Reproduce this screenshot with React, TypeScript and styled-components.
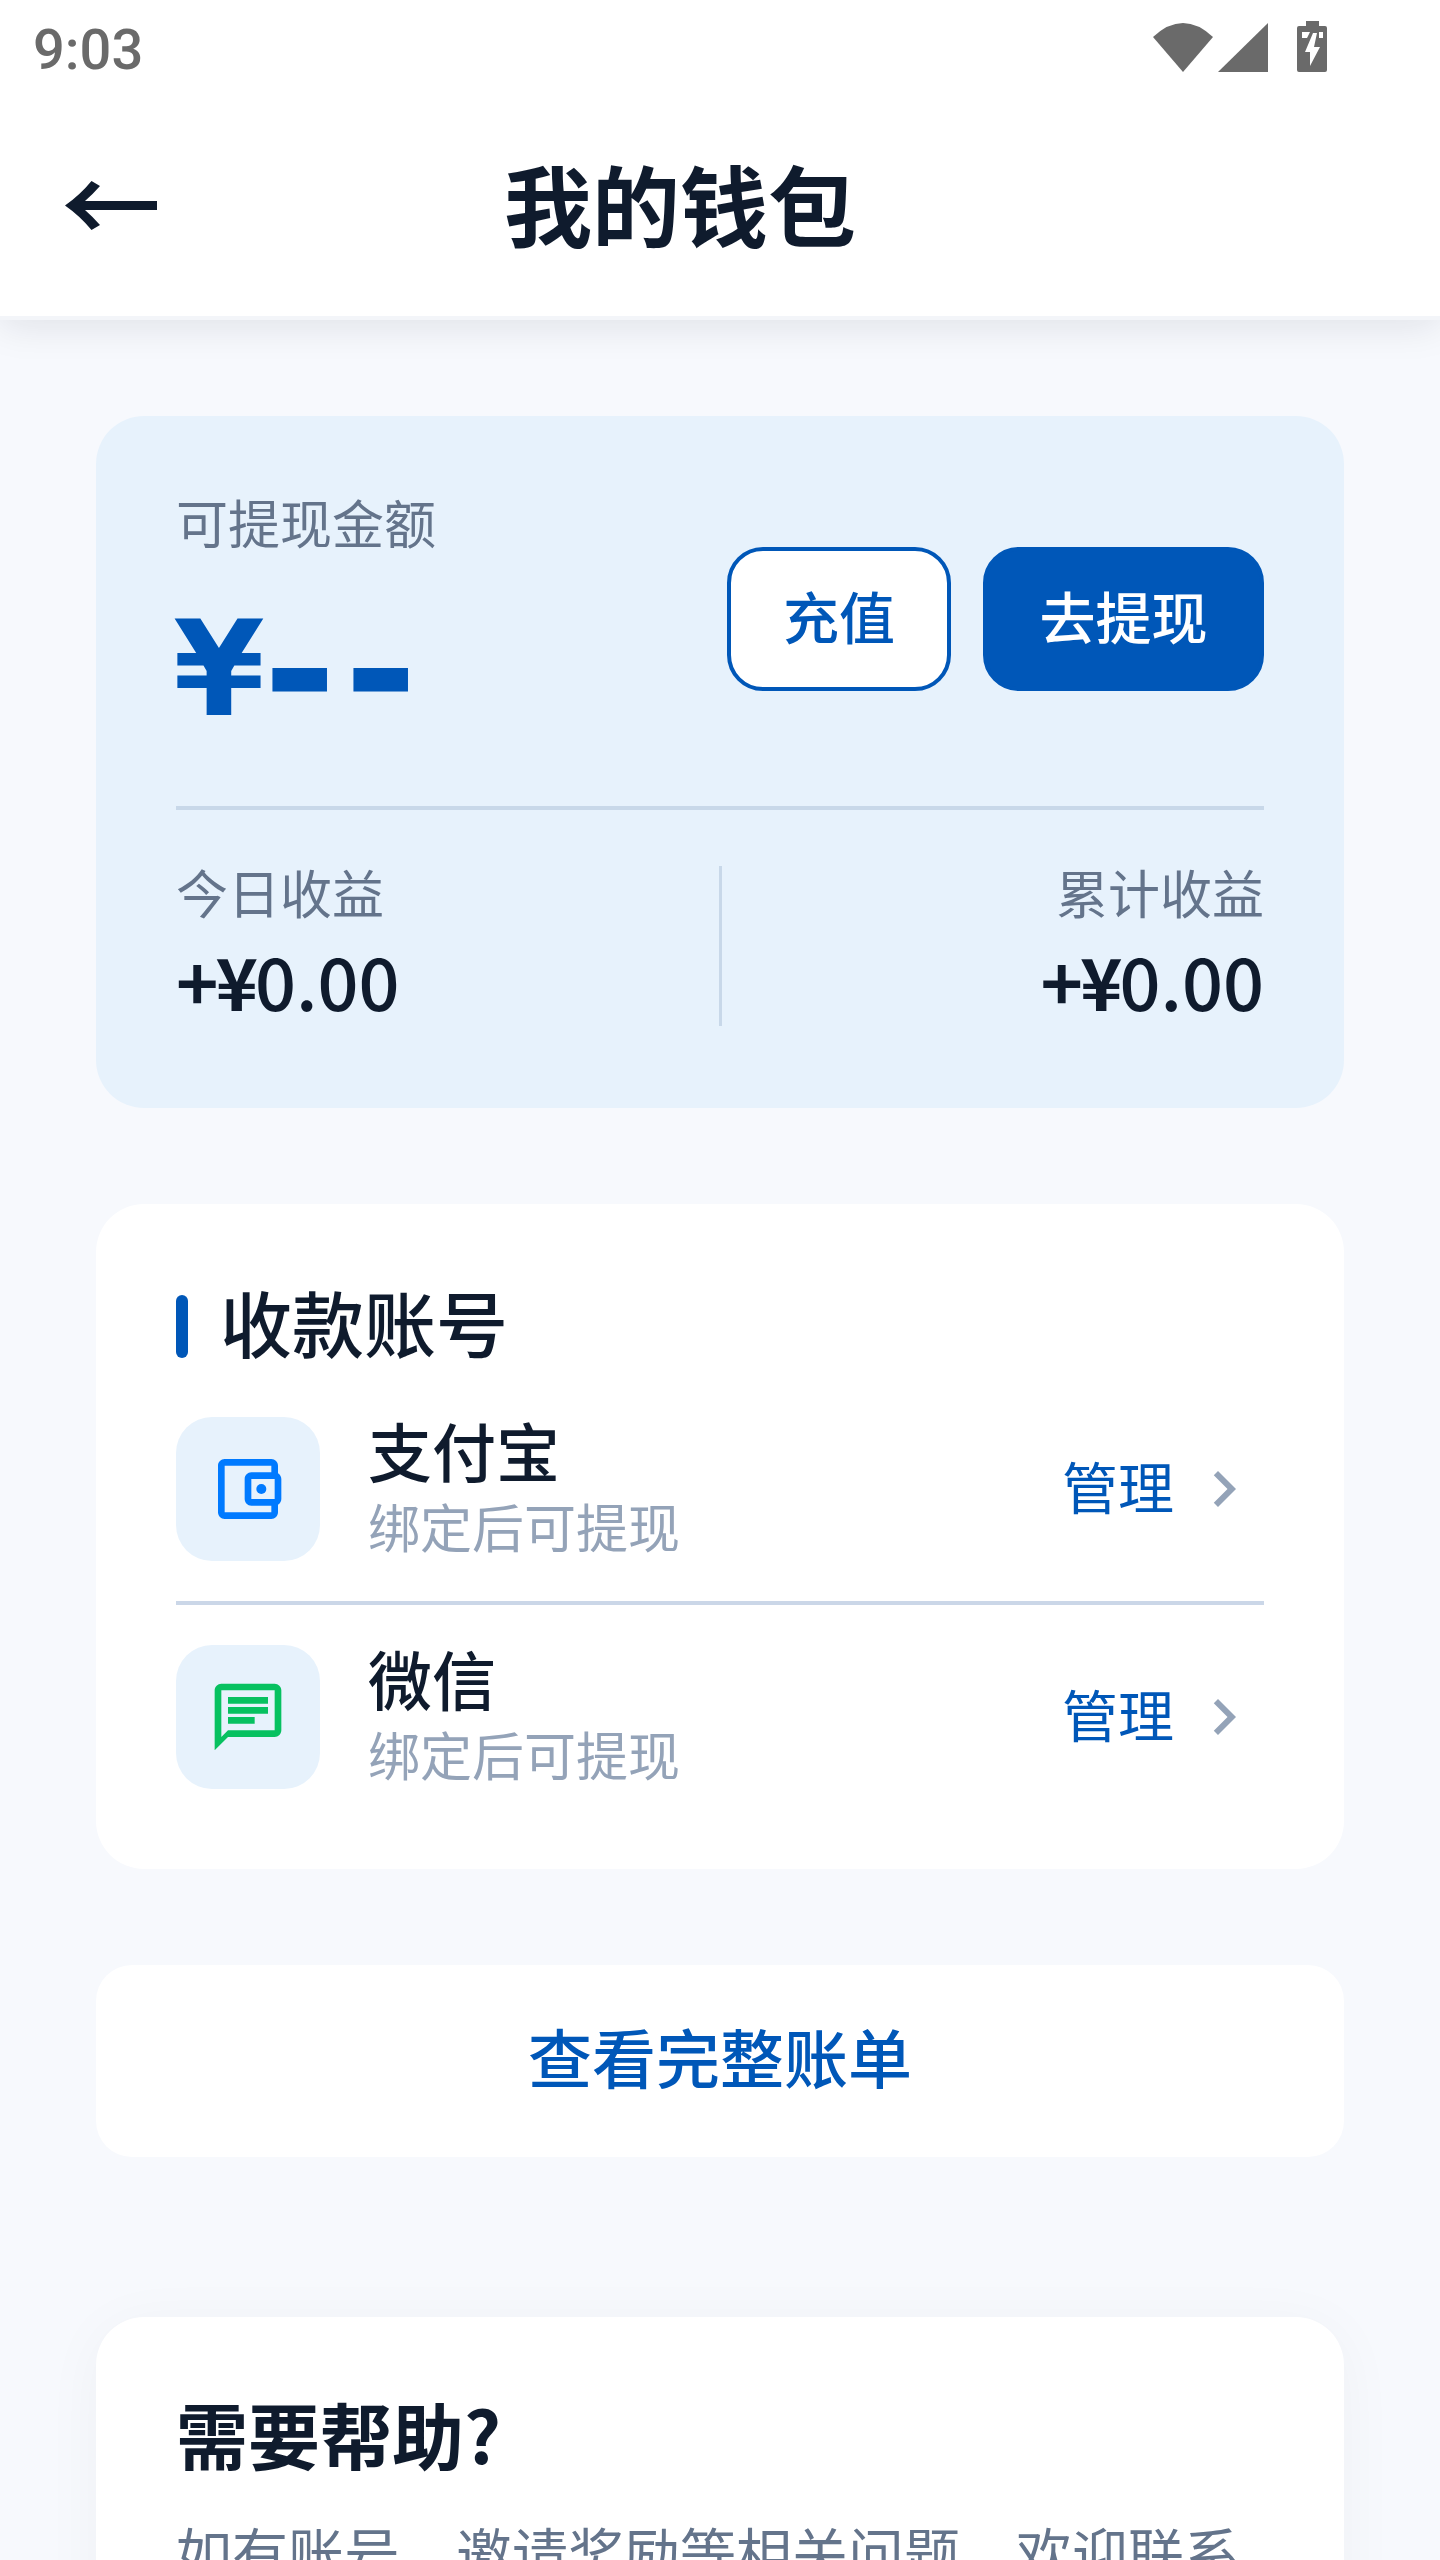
import styled, { createGlobalStyle } from 'styled-components'

const GlobalStyle = createGlobalStyle`
	html, body {
		margin: 0;
		padding: 0;
		overflow: hidden;
	}
	* {
		box-sizing: border-box;
	}
	body {
		font-family: 'Noto Sans CJK SC', sans-serif;
		background: #f7f9fd;
	}
`

const Page = styled.div`
	width: 1440px;
	height: 2560px;
	overflow: hidden;
	background: #f7f9fd;
`

const Top = styled.header`
	height: 320px;
	background: #ffffff;
	border-bottom: 4px solid #f3f5f9;
	box-shadow: 0 6px 36px rgba(15, 23, 42, 0.1);
	position: relative;
`

const StatusBar = styled.div`
	height: 100px;
	padding: 17px 112px 0 33px;
	display: flex;
	justify-content: space-between;
	align-items: flex-start;
`

const Time = styled.span`
	font-family: Roboto, sans-serif;
	font-size: 56px;
	line-height: 66px;
	font-weight: 500;
	color: #6a6a6a;
`

const StatusIcons = styled.svg`
	width: 176px;
	height: 60px;
	margin-top: 3px;
`

const AppBar = styled.div`
	height: 216px;
	padding: 0 65px;
	display: flex;
	align-items: center;
`

const BackIcon = styled.svg`
	width: 92px;
	height: 49px;
	margin-top: -6px;
	flex: none;
`

const PageTitle = styled.h1`
	margin: -13px 0 0 347px;
	font-size: 88px;
	line-height: 120px;
	font-weight: 700;
	color: #0f1b2d;
`

const Content = styled.main`
	padding: 96px 96px 0;
	display: flex;
	flex-direction: column;
`

const BalanceCard = styled.section`
	height: 692px;
	padding: 80px;
	border-radius: 48px;
	background: #e7f2fc;
`

const BalanceTop = styled.div`
	height: 314px;
	display: flex;
	justify-content: space-between;
	border-bottom: 4px solid #c8d8e9;
`

const Label = styled.div<{ right?: boolean }>`
	font-size: 52px;
	line-height: 52px;
	color: #64748b;
	text-align: ${(props) => (props.right ? 'right' : 'left')};
`

const Amount = styled.div`
	margin: 45px 0 0 -3px;
	height: 150px;
	font-family: 'DejaVu Sans', sans-serif;
	font-size: 132px;
	line-height: 150px;
	font-weight: 700;
	color: #0057b8;
`

const Dashes = styled.span`
	margin-left: -3px;
	font-family: Inter, sans-serif;
	font-size: 160px;
	font-weight: 900;
	letter-spacing: 5px;
	vertical-align: -11px;
`

const Buttons = styled.div`
	display: flex;
	gap: 32px;
	margin-top: 51px;
`

const ActionButton = styled.button<{ primary?: boolean }>`
	height: 144px;
	padding: 0 ${(props) => (props.primary ? '52.5px' : '52px')} 10px;
	border: 4px solid #0057b8;
	border-radius: 36px;
	background: ${(props) => (props.primary ? '#0057b8' : '#ffffff')};
	color: ${(props) => (props.primary ? '#ffffff' : '#0057b8')};
	font-family: inherit;
	font-size: 56px;
	font-weight: 500;
`

const Stats = styled.div`
	margin-top: 56px;
	display: flex;
`

const Stat = styled.div`
	flex: 1;
	height: 160px;
`

const StatDivider = styled.div`
	width: 3px;
	height: 160px;
	background: #c8d8e9;
`

const StatValue = styled.div<{ right?: boolean }>`
	margin-top: 20px;
	font-size: 72px;
	line-height: 84px;
	font-weight: 500;
	color: #0f1b2d;
	text-align: ${(props) => (props.right ? 'right' : 'left')};
`

const Sign = styled.span`
	font-weight: 700;
	letter-spacing: -3px;
`

const WhiteCard = styled.section`
	margin-top: 96px;
	padding: 80px;
	border-radius: 48px;
	background: #ffffff;
`

const SectionHead = styled.div`
	height: 93px;
	display: flex;
	align-items: center;
	gap: 32px;
`

const Bar = styled.span`
	width: 12px;
	height: 63px;
	margin-top: -8px;
	border-radius: 6px;
	background: #0057b8;
`

const SectionTitle = styled.h2`
	margin: -21px 0 0;
	font-size: 72px;
	line-height: 93px;
	font-weight: 500;
	color: #0f1b2d;
`

const AccountRow = styled.div<{ last?: boolean }>`
	display: flex;
	align-items: center;
	padding: 40px 0 ${(props) => (props.last ? '0' : '40px')};
	border-bottom: ${(props) => (props.last ? 'none' : '4px solid #cbd7e8')};
`

const IconBox = styled.div`
	width: 144px;
	height: 144px;
	border-radius: 36px;
	background: #e7f2fc;
	display: flex;
	align-items: center;
	justify-content: center;
	flex: none;
`

const AccountText = styled.div`
	margin: -10px 0 0 48px;
	flex: 1;
`

const AccountName = styled.div`
	font-size: 64px;
	line-height: 74px;
	font-weight: 500;
	color: #0f1b2d;
`

const AccountHint = styled.div`
	margin-top: 10px;
	font-size: 52px;
	line-height: 60px;
	color: #94a3b8;
`

const Manage = styled.span`
	margin-top: -10px;
	font-size: 56px;
	color: #0057b8;
`

const Chevron = styled.svg`
	width: 72px;
	height: 72px;
	margin: 0 4px 0 14px;
	fill: #94a3b8;
`

const BillButton = styled.div`
	margin-top: 96px;
	height: 192px;
	padding-bottom: 12px;
	border-radius: 36px;
	background: #ffffff;
	display: flex;
	align-items: center;
	justify-content: center;
	font-size: 64px;
	font-weight: 500;
	color: #0057b8;
`

const HelpCard = styled.section`
	margin-top: 160px;
	padding: 80px;
	height: 600px;
	border-radius: 48px;
	background: #ffffff;
	box-shadow: 0 8px 60px rgba(15, 23, 42, 0.04);
`

const HelpTitle = styled.h2`
	margin: 0;
	font-size: 72px;
	line-height: 72px;
	font-weight: 700;
	color: #0f1b2d;
`

const HelpBody = styled.p`
	margin: 40px 0 0;
	font-size: 56px;
	line-height: 84px;
	color: #64748b;
`

const accounts = [
	{ name: '支付宝', icon: 'wallet' },
	{ name: '微信', icon: 'chat' },
]

function WalletIcon() {
	return (
		<svg width="80" height="80" viewBox="0 0 24 24" fill="#007aff">
			<path d="M21 7.28V5c0-1.1-.9-2-2-2H5c-1.11 0-2 .9-2 2v14c0 1.1.89 2 2 2h14c1.1 0 2-.9 2-2v-2.28c.59-.35 1-.98 1-1.72V9c0-.74-.41-1.37-1-1.72zM20 9v6h-7V9h7zM5 19V5h14v2h-6c-1.1 0-2 .9-2 2v6c0 1.1.9 2 2 2h6v2H5z" />
			<circle cx="16" cy="12" r="1.5" />
		</svg>
	)
}

function ChatIcon() {
	return (
		<svg width="80" height="80" viewBox="0 0 24 24" fill="#07c160">
			<path d="M20 2H4c-1.1 0-2 .9-2 2v18l4-4h14c1.1 0 2-.9 2-2V4c0-1.1-.9-2-2-2zm0 14H6l-2 2V4h16v12z" />
			<path d="M6 9h12v2H6zm8 5H6v-2h8v2zm4-6H6V6h12v2z" />
		</svg>
	)
}

export default function App() {
	return (
		<Page>
			<GlobalStyle />
			<Top>
				<StatusBar>
					<Time>9:03</Time>
					<StatusIcons viewBox="0 0 176 60" fill="#6a6a6a">
						<path d="M1 17 Q31 -11 61 17 L31 52 Z" />
						<path d="M66 52 L116 3 V52 Z" />
						<path d="M154 1 h13 v5 h6 a2 2 0 0 1 2 2 v42 a2 2 0 0 1 -2 2 h-26 a2 2 0 0 1 -2 -2 v-42 a2 2 0 0 1 2 -2 h7 z" />
						<path d="M150 12 h8 l-3 6 h-5 z M167 12 h4 v6 h-4 z M161 13 h4 l-3 14 h6 l-10 19 v-14 h-5 z" fill="#ffffff" />
					</StatusIcons>
				</StatusBar>
				<AppBar>
					<BackIcon viewBox="0 0 92 49" fill="#0f1b2d">
						<path d="M0 24.5 Q15 14 26.5 0 L35 5 Q28 13 20 20 H92 V29 H20 Q28 36 35 44 L26.5 49 Q15 35 0 24.5 Z" />
					</BackIcon>
					<PageTitle>我的钱包</PageTitle>
				</AppBar>
			</Top>
			<Content>
				<BalanceCard>
					<BalanceTop>
						<div>
							<Label>可提现金额</Label>
							<Amount>
								¥<Dashes>--</Dashes>
							</Amount>
						</div>
						<Buttons>
							<ActionButton>充值</ActionButton>
							<ActionButton primary>去提现</ActionButton>
						</Buttons>
					</BalanceTop>
					<Stats>
						<Stat>
							<Label>今日收益</Label>
							<StatValue>
								<Sign>+¥</Sign>0.00
							</StatValue>
						</Stat>
						<StatDivider />
						<Stat>
							<Label right>累计收益</Label>
							<StatValue right>
								<Sign>+¥</Sign>0.00
							</StatValue>
						</Stat>
					</Stats>
				</BalanceCard>

				<WhiteCard>
					<SectionHead>
						<Bar />
						<SectionTitle>收款账号</SectionTitle>
					</SectionHead>
					{accounts.map((el, index) => (
						<AccountRow key={el.name} last={index === accounts.length - 1}>
							<IconBox>{el.icon === 'wallet' ? <WalletIcon /> : <ChatIcon />}</IconBox>
							<AccountText>
								<AccountName>{el.name}</AccountName>
								<AccountHint>绑定后可提现</AccountHint>
							</AccountText>
							<Manage>管理</Manage>
							<Chevron viewBox="0 0 24 24">
								<path d="M10 6L8.59 7.41 13.17 12l-4.58 4.59L10 18l6-6z" />
							</Chevron>
						</AccountRow>
					))}
				</WhiteCard>

				<BillButton>查看完整账单</BillButton>

				<HelpCard>
					<HelpTitle>需要帮助?</HelpTitle>
					<HelpBody>如有账号、邀请奖励等相关问题，欢迎联系客服</HelpBody>
				</HelpCard>
			</Content>
		</Page>
	)
}
